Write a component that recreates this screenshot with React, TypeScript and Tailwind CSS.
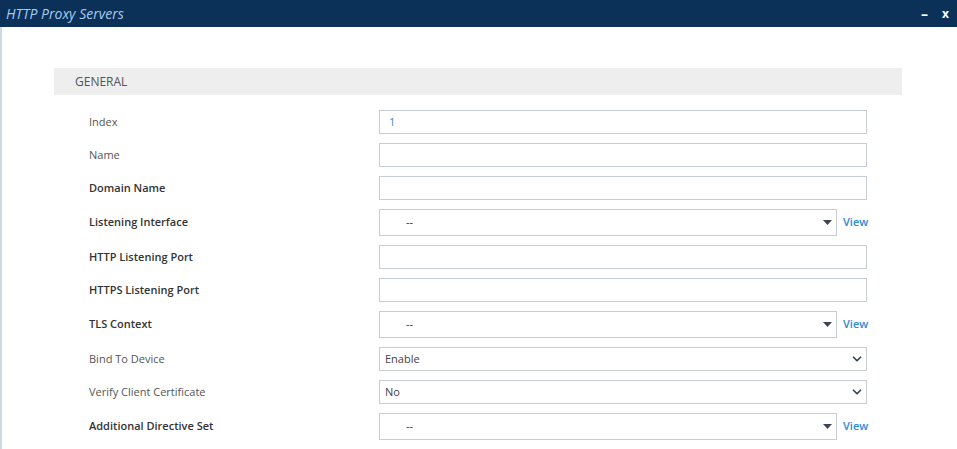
import { ChevronDown } from "lucide-react";

type Field = {
  label: string;
  strong?: boolean;
  kind: "text" | "lookup" | "select";
  value?: string;
};

const fields: Field[] = [
  { label: "Index", kind: "text", value: "1" },
  { label: "Name", kind: "text" },
  { label: "Domain Name", strong: true, kind: "text" },
  { label: "Listening Interface", strong: true, kind: "lookup", value: "--" },
  { label: "HTTP Listening Port", strong: true, kind: "text" },
  { label: "HTTPS Listening Port", strong: true, kind: "text" },
  { label: "TLS Context", strong: true, kind: "lookup", value: "--" },
  { label: "Bind To Device", kind: "select", value: "Enable" },
  { label: "Verify Client Certificate", kind: "select", value: "No" },
  { label: "Additional Directive Set", strong: true, kind: "lookup", value: "--" },
];

function FieldControl({ field }: { field: Field }) {
  if (field.kind === "lookup") {
    return (
      <div className="flex items-center">
        <div className="flex h-[27px] w-[458px] items-center justify-between border border-[#c8ccd4] pl-[26px] pr-[3px] text-[11px] text-[#333]">
          <span>{field.value}</span>
          <svg width="9" height="5" viewBox="0 0 9 5" className="mr-[1px]">
            <path d="M0 0h9L4.5 5z" fill="#3c4550" />
          </svg>
        </div>
        <span className="ml-[6px] text-[11px] font-semibold text-[#2b8ad6]">View</span>
      </div>
    );
  }
  if (field.kind === "select") {
    return (
      <div className="flex h-[24px] w-[488px] items-center justify-between border border-[#c8ccd4] pl-[5px] pr-[2px] text-[11px] text-[#444]">
        <span>{field.value}</span>
        <ChevronDown size={14} strokeWidth={3} color="#3c4550" />
      </div>
    );
  }
  return (
    <div className="flex h-[24px] w-[488px] items-center border border-[#c8ccd4] pl-[9px] text-[11px] text-[#3a8ad8]">
      {field.value}
    </div>
  );
}

export default function App() {
  return (
    <div className="h-[449px] w-[957px] overflow-hidden bg-white font-['Open_Sans',sans-serif]">
      <div className="flex h-[27px] items-center justify-between bg-[#0b3158] pl-[6px] pr-[8px]">
        <span className="text-[14px] italic text-[#a7caf2]">HTTP Proxy Servers</span>
        <div className="flex items-center gap-[14px] text-white">
          <span className="text-[14px] font-bold leading-none">–</span>
          <span className="text-[12px] font-bold leading-none">x</span>
        </div>
      </div>
      <div className="h-[422px] border-l-2 border-[#d3d7de] pt-[41px]">
        <div className="ml-[52px] flex h-[27px] w-[848px] items-center bg-[#eeeeee] pl-[21px] text-[12px] text-[#555]">
          GENERAL
        </div>
        <div className="mt-[15px] flex flex-col gap-[9px] pl-[87px]">
          {fields.map((f) => (
            <div key={f.label} className="flex items-center">
              <div
                className={
                  f.strong
                    ? "w-[290px] text-[11px] font-semibold text-[#333]"
                    : "w-[290px] text-[11px] text-[#555]"
                }
              >
                {f.label}
              </div>
              <FieldControl field={f} />
            </div>
          ))}
        </div>
      </div>
    </div>
  );
}
